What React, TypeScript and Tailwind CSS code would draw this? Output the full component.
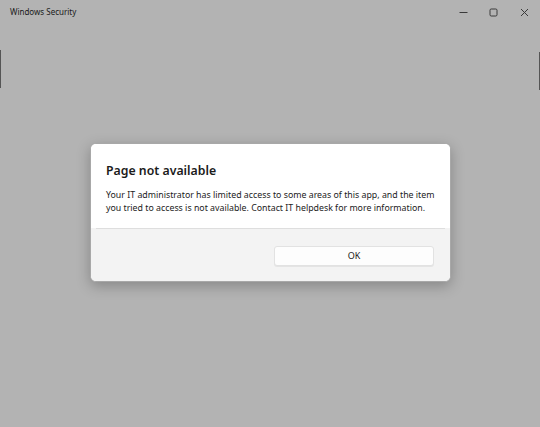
import React from "react";

export default function App() {
  return (
    <div
      className="relative w-[540px] h-[427px] bg-[#b3b3b3] overflow-hidden flex flex-col"
      style={{ fontFamily: '"Noto Sans", "Liberation Sans", sans-serif' }}
    >
      {/* Title bar */}
      <div className="flex items-center h-[24px] shrink-0">
        <span className="pl-[10px] text-[8px] text-[#1a1a1a]">Windows Security</span>
        <div className="ml-auto flex items-center h-full">
          <div className="w-[30px] h-full flex items-center justify-center">
            <svg width="9" height="9" viewBox="0 0 9 9">
              <line x1="0.5" y1="4.5" x2="8.5" y2="4.5" stroke="#3a3a3a" strokeWidth="1" />
            </svg>
          </div>
          <div className="w-[30px] h-full flex items-center justify-center">
            <svg width="9" height="9" viewBox="0 0 9 9">
              <rect x="1" y="1" width="7" height="7" rx="1.2" fill="none" stroke="#3a3a3a" strokeWidth="1" />
            </svg>
          </div>
          <div className="w-[32px] h-full flex items-center justify-center">
            <svg width="9" height="9" viewBox="0 0 9 9">
              <path d="M1 1 L8 8 M8 1 L1 8" stroke="#3a3a3a" strokeWidth="1" />
            </svg>
          </div>
        </div>
      </div>

      {/* underlying app remnants at edges */}
      <div className="absolute left-0 top-[50px] w-[1px] h-[38px] bg-[#555]" />
      <div className="absolute right-0 top-[52px] w-[1px] h-[38px] bg-[#555]" />

      {/* Dialog */}
      <div className="flex justify-center mt-[119px] pl-[1px]">
        <div className="w-[361px] h-[139px] bg-white rounded-[6px] shadow-[0_4px_14px_rgba(0,0,0,0.25)] overflow-hidden flex flex-col border border-[#a8a8a8]">
          <div className="bg-white pl-[15px] pr-[4px] pt-[18px] pb-[13px]">
            <h1 className="text-[12.3px] font-semibold text-[#1b1b1b] leading-[18px]">Page not available</h1>
            <p className="mt-[9px] text-[8.8px] leading-[13px] text-[#222] whitespace-nowrap">
              Your IT administrator has limited access to some areas of this app, and the item
              <br />
              you tried to access is not available. Contact IT helpdesk for more information.
            </p>
          </div>
          <div className="flex-1 bg-[#f3f3f3] flex flex-col">
            <div className="mx-[5px] h-[1px] bg-[#dedede]" />
            <div className="flex justify-end pt-[17px] pr-[16px]">
              <button className="w-[160px] h-[20px] bg-[#fdfdfd] border border-[#e2e2e2] rounded-[3px] text-[9px] text-[#1b1b1b] flex items-center justify-center shadow-[0_1px_0_rgba(0,0,0,0.06)]">
                OK
              </button>
            </div>
          </div>
        </div>
      </div>
    </div>
  );
}
